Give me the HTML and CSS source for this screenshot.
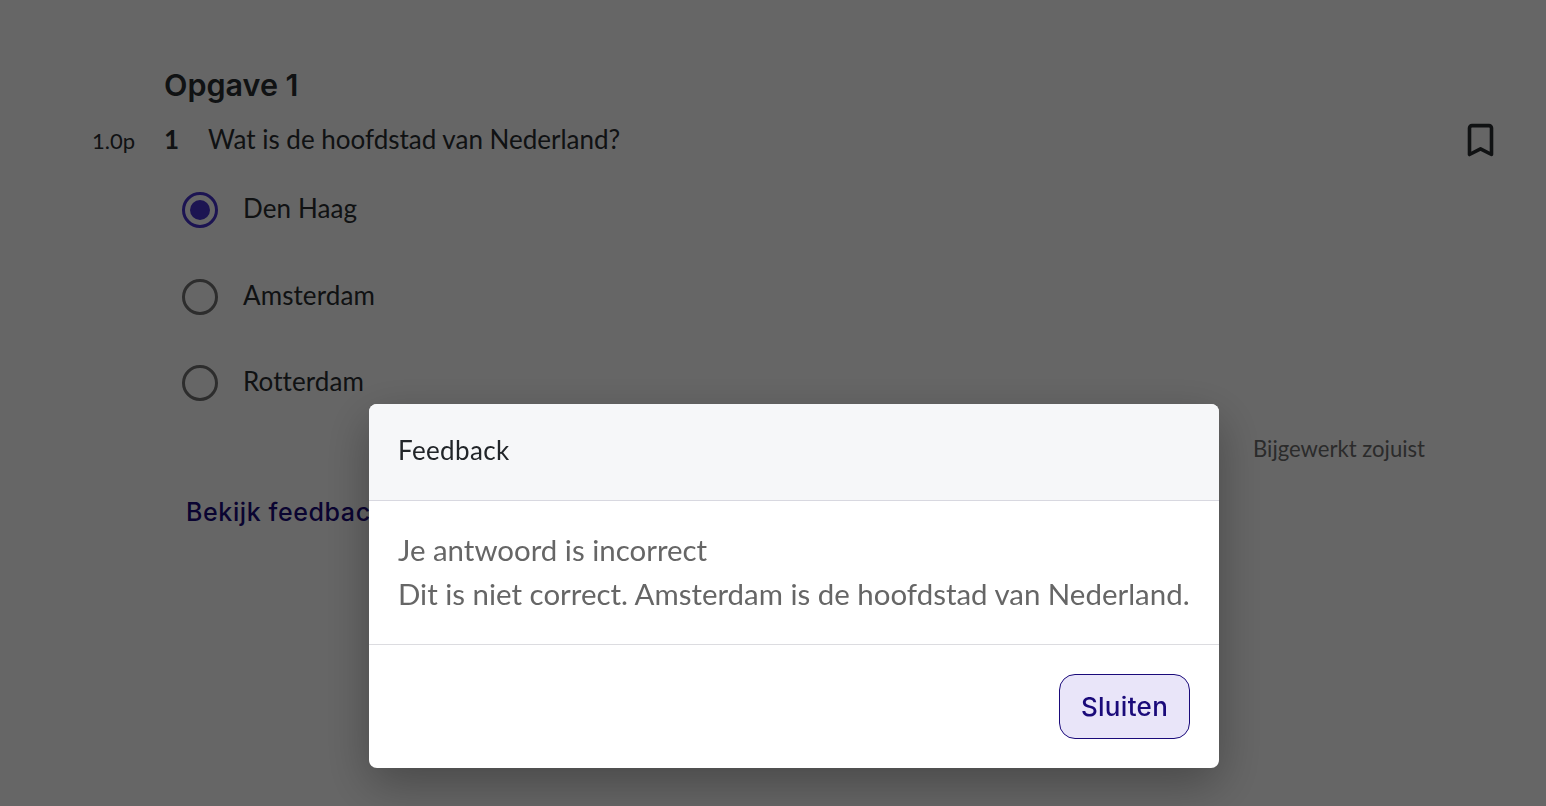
FILE: index.html
```html
<!DOCTYPE html>
<html lang="nl">
<head>
<meta charset="utf-8">
<title>Opgave 1</title>
<link rel="stylesheet" href="styles.css">
</head>
<body>
<main class="page">
  <h1 class="title">Opgave 1</h1>
  <div class="question">
    <span class="points">1.0p</span>
    <span class="number">1</span>
    <span class="prompt">Wat is de hoofdstad van Nederland?</span>
    <svg class="bookmark" width="36" height="36" viewBox="0 0 36 36" fill="none" aria-hidden="true">
      <path d="M11.5 32.5V6.1c0-1.4 1.1-2.5 2.5-2.5h17c1.4 0 2.5 1.1 2.5 2.5v26.4l-11-5.6-11 5.6Z" stroke="#2a2d31" stroke-width="3.6" stroke-linejoin="round"/>
    </svg>
  </div>
  <ul class="options">
    <li class="option"><span class="radio radio-on"><span class="dot"></span></span><span class="label">Den Haag</span></li>
    <li class="option"><span class="radio"></span><span class="label">Amsterdam</span></li>
    <li class="option"><span class="radio"></span><span class="label">Rotterdam</span></li>
  </ul>
  <div class="status">Bijgewerkt zojuist</div>
  <a class="feedback-link">Bekijk feedback</a>
</main>
<div class="backdrop">
  <section class="modal">
    <header class="modal-head"><span class="head-text">Feedback</span></header>
    <div class="modal-body">
      <p class="result">Je antwoord is incorrect</p>
      <p class="message">Dit is niet correct. Amsterdam is de hoofdstad van Nederland.</p>
    </div>
    <footer class="modal-foot"><button class="close">Sluiten</button></footer>
  </section>
</div>
</body>
</html>
```
FILE: styles.css
```css
* { box-sizing: border-box; }
html, body { margin: 0; height: 100%; }
body {
  background: #fff;
  color: #2a2d31;
  font-family: "Lato", "Open Sans", sans-serif;
  overflow: hidden;
}
.page { padding: 68px 52px 0 92px; }
.title {
  margin: 0 0 0 72px;
  padding-bottom: 2px;
  height: 36px;
  font: 600 30.5px/34px "Inter", sans-serif;
}
.question {
  display: flex;
  align-items: center;
  height: 36px;
  margin-top: 18px;
  font-size: 26px;
}
.points { width: 72px; font-size: 22px; padding-top: 1px; }
.number { width: 44px; font-weight: 700; padding-bottom: 3px; }
.prompt { flex: 1; padding-bottom: 3px; }
.bookmark { flex: none; }
.options { list-style: none; margin: 34px 0 0 90px; padding: 0; }
.option {
  display: flex;
  align-items: center;
  gap: 25px;
  height: 36px;
  margin-bottom: 50.5px;
  font-size: 26px;
  letter-spacing: 0.1px;
}
.label { padding-bottom: 4px; }
.radio {
  width: 36px;
  height: 36px;
  border: 3px solid #707070;
  border-radius: 50%;
  display: flex;
  align-items: center;
  justify-content: center;
}
.radio-on { border-color: #4633cc; }
.dot { width: 20px; height: 20px; border-radius: 50%; background: #4633cc; }
.status {
  margin: -17.5px 69px 0 0;
  text-align: right;
  font-size: 22.1px;
  color: #6c6c6c;
  line-height: 30px;
}
.feedback-link {
  display: block;
  margin: 30px 0 0 94px;
  font: 500 25px/36px "Inter", sans-serif;
  letter-spacing: 0.6px;
  color: #1a0a7a;
}
.backdrop {
  position: fixed;
  inset: 0;
  background: rgba(0, 0, 0, 0.6);
}
.modal {
  position: absolute;
  left: 369px;
  top: 404px;
  width: 850px;
  background: #fff;
  border-radius: 8px;
  overflow: hidden;
  box-shadow: 0 16px 48px rgba(0, 0, 0, 0.3);
}
.modal-head {
  height: 97px;
  padding: 0 29px;
  display: flex;
  align-items: center;
  background: #f6f7f9;
  border-bottom: 1px solid #d8d8e0;
  font-size: 26px;
  letter-spacing: 0.35px;
  color: #212529;
}
.head-text { padding-bottom: 4px; }
.modal-body {
  height: 144px;
  padding: 27px 29px 0;
  border-bottom: 1px solid #dcdce0;
  color: #666;
  font-size: 29.45px;
  line-height: 44px;
}
.modal-body p { margin: 0; white-space: nowrap; }
.modal-foot {
  height: 123px;
  padding: 29px 29px 0;
  display: flex;
  justify-content: flex-end;
  align-items: flex-start;
}
.close {
  width: 131px;
  height: 65px;
  padding: 0;
  background: #e9e5f9;
  border: 1px solid #1a0a7a;
  border-radius: 16px;
  color: #1a0a7a;
  font: 500 26px "Inter", sans-serif;
  letter-spacing: 0.3px;
}
```
